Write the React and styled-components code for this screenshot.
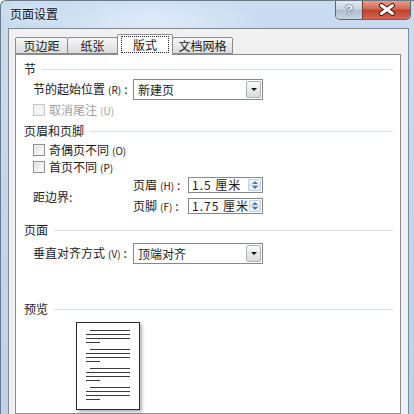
import React from 'react';
import styled, { createGlobalStyle } from 'styled-components';

const GlobalStyle = createGlobalStyle`
  html, body { margin: 0; padding: 0; background: #fff; }
  body {
    font-family: "Noto Sans CJK SC", "Liberation Sans", sans-serif;
    font-size: 12px;
    color: #1a1a1a;
  }
`;

const Window = styled.div`
  width: 414px;
  height: 414px;
  overflow: hidden;
  box-sizing: border-box;
  display: flex;
  flex-direction: column;
  border-top: 1px solid #6d7986;
  border-left: 1px solid #6d7986;
  border-top-left-radius: 6px;
  background:
    radial-gradient(ellipse 160px 40px at 150px 20px, rgba(255,255,255,0.45), rgba(255,255,255,0) 70%),
    linear-gradient(180deg, #c9dcf1 0%, #bad2ec 100%);
`;

const TitleBar = styled.div`
  height: 27px;
  display: flex;
  align-items: flex-start;
  padding-left: 9px;
`;

const Title = styled.div`
  margin-top: 5px;
  line-height: 16px;
  font-size: 12px;
  color: #111;
  text-shadow: 0 0 6px rgba(255,255,255,0.9);
`;

const Caption = styled.div`
  margin-left: auto;
  margin-right: 3px;
  margin-top: -1px;
  display: flex;
  height: 19px;
  border: 1px solid #5b6673;
  border-top: none;
  border-radius: 0 0 5px 5px;
  overflow: hidden;
`;

const CaptionButton = styled.div`
  width: ${p => p.$w}px;
  display: flex;
  align-items: center;
  justify-content: center;
  font-family: "Liberation Sans", sans-serif;
  font-weight: bold;
  font-size: 13px;
  color: #f8f8f8;
  text-shadow: 0 0 2px #33475c, 0 0 1px #33475c;
  background: ${p => p.$close
    ? 'linear-gradient(180deg, #e8a493 0%, #d46c57 45%, #c1412b 55%, #cf6a4e 100%)'
    : 'linear-gradient(180deg, #e3ebf3 0%, #c9d6e3 45%, #aebfd1 55%, #c5d3e1 100%)'};
  border-left: ${p => p.$close ? '1px solid #7a3a32' : 'none'};
`;

const Client = styled.div`
  flex: 1;
  margin: 0 5px 0 7px;
  border: 1px solid #7f8a95;
  border-bottom: none;
  background: #f0f0f0;
  padding: 5px 7px 0 6px;
  display: flex;
  flex-direction: column;
`;

const TabRow = styled.div`
  height: 20px;
  display: flex;
  align-items: flex-end;
`;

const Tab = styled.div`
  position: relative;
  box-sizing: border-box;
  width: ${p => p.$w}px;
  height: ${p => (p.$active ? 21 : 17)}px;
  margin-left: -1px;
  margin-bottom: ${p => (p.$active ? -1 : 0)}px;
  z-index: ${p => (p.$active ? 2 : 1)};
  border: 1px solid #898c95;
  border-bottom: ${p => (p.$active ? 'none' : '1px solid #898c95')};
  border-radius: 2px 2px 0 0;
  background: ${p => (p.$active ? '#fff' : 'linear-gradient(180deg, #f6f6f6 0%, #e9e9e9 50%, #dcdcdc 100%)')};
  display: flex;
  align-items: ${p => (p.$active ? 'flex-start' : 'center')};
  justify-content: center;
  padding-top: ${p => (p.$active ? 2 : 0)}px;
  line-height: 14px;
  &:first-child { margin-left: 0; }
`;

const Focus = styled.span`
  outline: 1px dotted #222;
  outline-offset: 0;
  padding: 0 11px;
  line-height: 15px;
`;

const Panel = styled.div`
  flex: 1;
  background: #fff;
  border: 1px solid #898c95;
  padding: 0 7px 0 8px;
  display: flex;
  flex-direction: column;
`;

const GroupHeader = styled.div`
  margin-top: ${p => p.$top}px;
  height: 14px;
  line-height: 14px;
  display: flex;
  align-items: center;
  gap: 6px;
  &::after {
    content: '';
    flex: 1;
    height: 1px;
    background: #d5dfe5;
  }
`;

const Row = styled.div`
  margin-top: ${p => p.$top}px;
  padding-left: 9px;
  display: flex;
  align-items: center;
  height: ${p => p.$h}px;
`;

const Label = styled.div`
  width: ${p => p.$w || 100}px;
  flex: none;
  line-height: 14px;
  color: ${p => (p.$disabled ? '#a0a0a0' : '#1a1a1a')};
`;

const Key = styled.span`
  font-size: 10px;
  margin-left: 3px;
  margin-right: 3px;
`;

const Select = styled.div`
  box-sizing: border-box;
  width: 130px;
  height: 21px;
  border: 1px solid #828790;
  display: flex;
  align-items: center;
  padding: 1px;
  padding-left: 4px;
`;

const SelectText = styled.div`
  flex: 1;
  line-height: 14px;
`;

const DropButton = styled.div`
  box-sizing: border-box;
  width: 15px;
  height: 17px;
  border: 1px solid #a9b2bc;
  border-radius: 2px;
  background: linear-gradient(180deg, #fbfbfb 0%, #e9e9e9 50%, #dadada 100%);
  display: flex;
  align-items: center;
  justify-content: center;
  &::after {
    content: '';
    border-left: 3px solid transparent;
    border-right: 3px solid transparent;
    border-top: 3px solid #111;
  }
`;

const Check = styled.div`
  margin-top: ${p => p.$top}px;
  padding-left: 9px;
  height: 14px;
  display: flex;
  align-items: center;
  gap: 4px;
  color: ${p => (p.$disabled ? '#a0a0a0' : '#1a1a1a')};
  line-height: 14px;
`;

const Box = styled.span`
  box-sizing: border-box;
  width: 12px;
  height: 12px;
  border: 1px solid ${p => (p.$disabled ? '#c8c8c8' : '#8e8f8f')};
  background: ${p => (p.$disabled
    ? '#f4f4f4'
    : 'linear-gradient(135deg, #dcdcdc 0%, #f3f3f3 60%, #fafafa 100%)')};
  box-shadow: inset 0 0 0 1px ${p => (p.$disabled ? '#f0f0f0' : '#f4f4f4')};
`;

const MarginBlock = styled.div`
  margin-top: 3px;
  padding-left: 9px;
  display: flex;
  align-items: center;
`;

const SpinList = styled.div`
  display: flex;
  flex-direction: column;
  gap: 5px;
`;

const SpinRow = styled.div`
  display: flex;
  align-items: center;
  height: 16px;
`;

const Spin = styled.div`
  box-sizing: border-box;
  width: 75px;
  height: 16px;
  border: 1px solid #828790;
  display: flex;
  align-items: stretch;
  padding: 1px;
`;

const SpinValue = styled.div`
  flex: 1;
  padding-left: 2px;
  line-height: 12px;
  letter-spacing: 1px;
  white-space: pre;
`;

const SpinButtons = styled.div`
  box-sizing: border-box;
  width: 13px;
  display: flex;
  flex-direction: column;
  border: 1px solid #c3cfdc;
  border-radius: 1px;
`;

const SpinArrow = styled.div`
  flex: 1;
  background: linear-gradient(180deg, #f3f6fa 0%, #e1e9f2 100%);
  display: flex;
  align-items: center;
  justify-content: center;
  & + & { border-top: 1px solid #c3cfdc; }
  &::after {
    content: '';
    border-left: 3px solid transparent;
    border-right: 3px solid transparent;
    ${p => (p.$up ? 'border-bottom: 3px solid #4a78b0;' : 'border-top: 3px solid #4a78b0;')}
  }
`;

const Page = styled.div`
  box-sizing: border-box;
  margin-top: 6px;
  margin-left: 52px;
  width: 64px;
  height: 88px;
  border: 1px solid #2a2a2a;
  background: #fff;
  box-shadow: 2px 2px 3px rgba(0,0,0,0.3);
  padding: 7px 0 0 9px;
  display: flex;
  flex-direction: column;
  gap: 6px;
`;

const Para = styled.div`
  display: flex;
  flex-direction: column;
  gap: 3px;
`;

const Line = styled.div`
  height: 1px;
  width: ${p => p.$w}px;
  margin-left: ${p => p.$indent || 0}px;
  background: #3a3a3a;
`;

const paragraphs = [0, 1, 2, 3];

function Mnemonic({ k }) {
  return <Key>({k})</Key>;
}

function CloseGlyph() {
  return (
    <svg width="18" height="13" viewBox="0 0 18 13">
      <path d="M3.5 2.5 L14.5 10.5 M14.5 2.5 L3.5 10.5" stroke="#4a1a12" strokeWidth="5" strokeLinecap="round" />
      <path d="M3.5 2.5 L14.5 10.5 M14.5 2.5 L3.5 10.5" stroke="#ffffff" strokeWidth="3" strokeLinecap="round" />
    </svg>
  );
}

export default function App() {
  return (
    <>
      <GlobalStyle />
      <Window>
        <TitleBar>
          <Title>页面设置</Title>
          <Caption>
            <CaptionButton $w={26}>?</CaptionButton>
            <CaptionButton $w={47} $close><CloseGlyph /></CaptionButton>
          </Caption>
        </TitleBar>
        <Client>
          <TabRow>
            <Tab $w={53}>页边距</Tab>
            <Tab $w={51}>纸张</Tab>
            <Tab $w={56} $active><Focus>版式</Focus></Tab>
            <Tab $w={61}>文档网格</Tab>
          </TabRow>
          <Panel>
            <GroupHeader $top={7}>节</GroupHeader>
            <Row $top={3} $h={21}>
              <Label>节的起始位置<Mnemonic k="R" />:</Label>
              <Select>
                <SelectText>新建页</SelectText>
                <DropButton />
              </Select>
            </Row>
            <Check $top={3} $disabled>
              <Box $disabled />
              <span>取消尾注<Mnemonic k="U" /></span>
            </Check>

            <GroupHeader $top={7}>页眉和页脚</GroupHeader>
            <Check $top={5}>
              <Box />
              <span>奇偶页不同<Mnemonic k="O" /></span>
            </Check>
            <Check $top={3}>
              <Box />
              <span>首页不同<Mnemonic k="P" /></span>
            </Check>
            <MarginBlock>
              <Label style={{ paddingTop: 2 }}>距边界:</Label>
              <SpinList>
                <SpinRow>
                  <Label $w={55}>页眉<Mnemonic k="H" />:</Label>
                  <Spin>
                    <SpinValue>1.5 厘米</SpinValue>
                    <SpinButtons><SpinArrow $up /><SpinArrow /></SpinButtons>
                  </Spin>
                </SpinRow>
                <SpinRow>
                  <Label $w={55}>页脚<Mnemonic k="F" />:</Label>
                  <Spin>
                    <SpinValue>1.75 厘米</SpinValue>
                    <SpinButtons><SpinArrow $up /><SpinArrow /></SpinButtons>
                  </Spin>
                </SpinRow>
              </SpinList>
            </MarginBlock>

            <GroupHeader $top={9}>页面</GroupHeader>
            <Row $top={6} $h={21}>
              <Label>垂直对齐方式<Mnemonic k="V" />:</Label>
              <Select>
                <SelectText>顶端对齐</SelectText>
                <DropButton />
              </Select>
            </Row>

            <GroupHeader $top={38}>预览</GroupHeader>
            <Page>
              {paragraphs.map(i => (
                <Para key={i}>
                  <Line $w={40} $indent={4} />
                  <Line $w={44} />
                  <Line $w={44} />
                  <Line $w={14} />
                </Para>
              ))}
            </Page>
          </Panel>
        </Client>
      </Window>
    </>
  );
}
